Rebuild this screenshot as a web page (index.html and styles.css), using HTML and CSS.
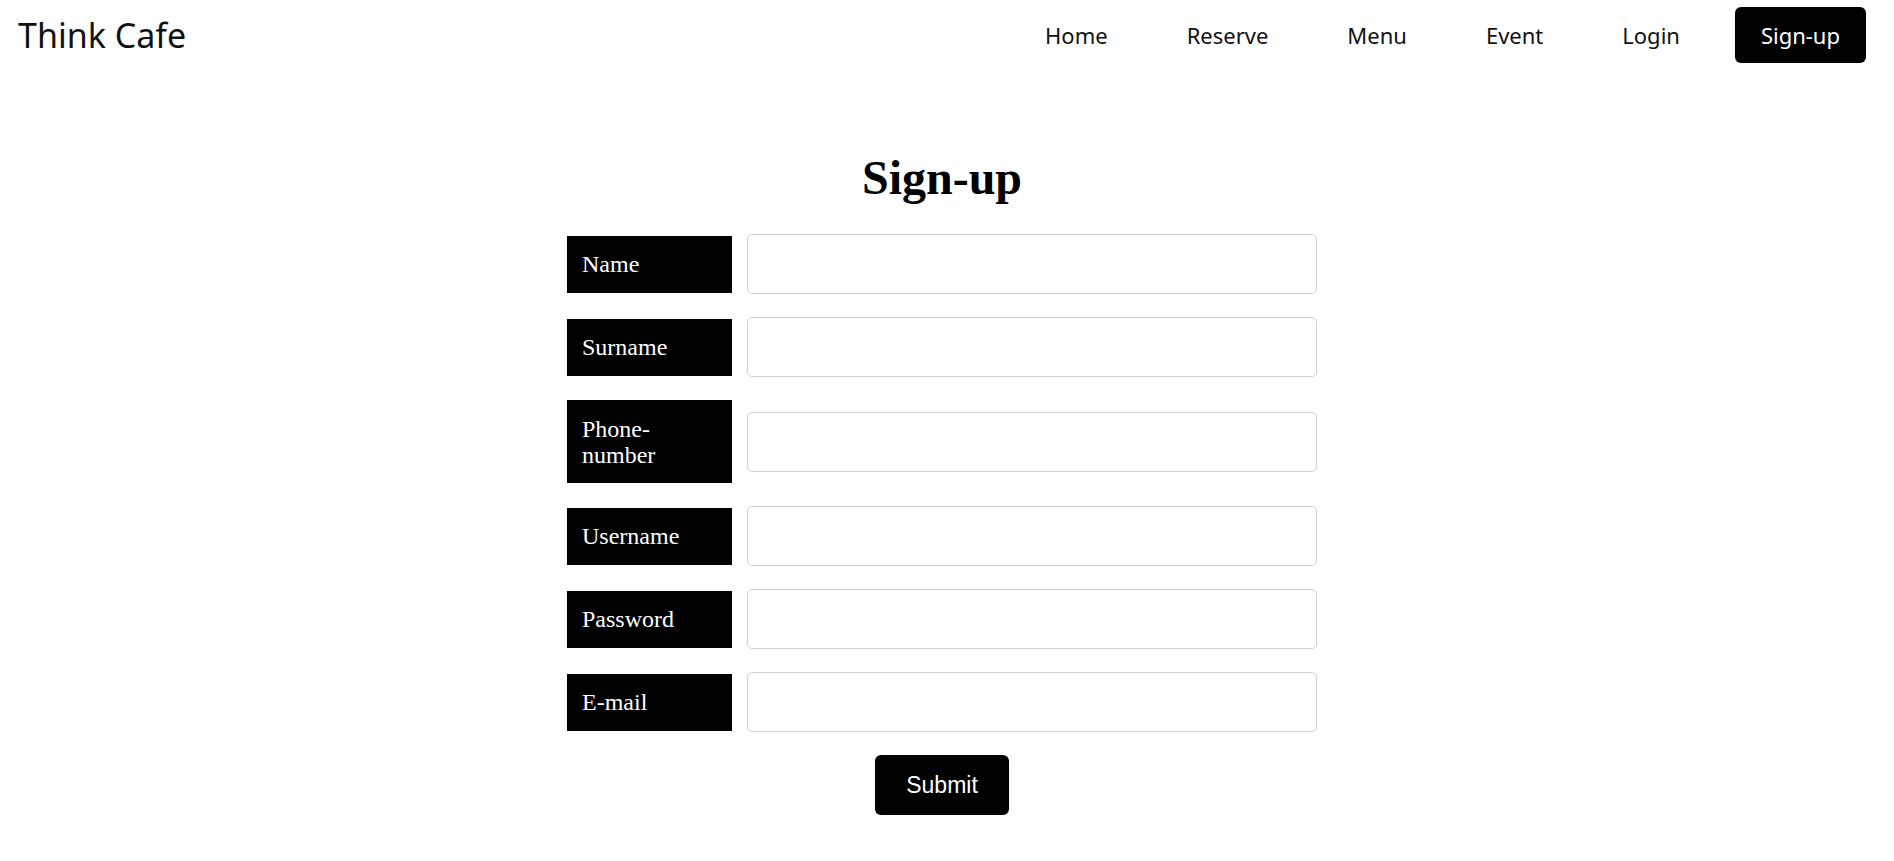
FILE: index.html
```html
<!DOCTYPE html>
<html lang="en">
<head>
<meta charset="utf-8">
<title>Think Cafe - Sign-up</title>
<link rel="stylesheet" href="styles.css">
</head>
<body>
<header class="topbar">
  <div class="logo">Think Cafe</div>
  <nav class="nav">
    <a class="nav-link" href="#">Home</a>
    <a class="nav-link" href="#">Reserve</a>
    <a class="nav-link" href="#">Menu</a>
    <a class="nav-link" href="#">Event</a>
    <a class="nav-link" href="#">Login</a>
    <a class="nav-link nav-active" href="#">Sign-up</a>
  </nav>
</header>
<main class="main">
  <h1 class="title">Sign-up</h1>
  <form class="form">
    <div class="row">
      <label class="label" for="name">Name</label>
      <input class="field" id="name" type="text">
    </div>
    <div class="row">
      <label class="label" for="surname">Surname</label>
      <input class="field" id="surname" type="text">
    </div>
    <div class="row">
      <label class="label" for="phone">Phone-number</label>
      <input class="field" id="phone" type="text">
    </div>
    <div class="row">
      <label class="label" for="username">Username</label>
      <input class="field" id="username" type="text">
    </div>
    <div class="row">
      <label class="label" for="password">Password</label>
      <input class="field" id="password" type="password">
    </div>
    <div class="row">
      <label class="label" for="email">E-mail</label>
      <input class="field" id="email" type="email">
    </div>
    <div class="actions">
      <button class="submit" type="button">Submit</button>
    </div>
  </form>
</main>
</body>
</html>
```
FILE: styles.css
```css
* { box-sizing: border-box; }

html, body {
  margin: 0;
  padding: 0;
  background: #ffffff;
}

body {
  font-family: "Noto Sans", "Open Sans", sans-serif;
  color: #000;
}

.topbar {
  height: 70px;
  display: flex;
  align-items: center;
  justify-content: space-between;
  padding: 0 28px 0 18px;
}

.logo {
  font-size: 34px;
  color: #111;
  line-height: 1;
}

.nav {
  display: flex;
  align-items: center;
  gap: 31px;
}

.nav-link {
  font-size: 22px;
  color: #111;
  text-decoration: none;
  padding: 12px 24px;
  line-height: 32px;
  border-radius: 6px;
}

.nav-active {
  background: #000;
  color: #fff;
  padding: 12px 26px;
}

.main {
  padding-right: 10px;
}

.title {
  font-family: "Liberation Serif", "Times New Roman", serif;
  font-weight: bold;
  font-size: 48px;
  text-align: center;
  margin: 80px 0 29px;
}

.form {
  width: 750px;
  margin: 0 auto;
  display: flex;
  flex-direction: column;
  gap: 23px;
}

.row {
  display: flex;
  align-items: center;
  gap: 15px;
}

.label {
  width: 165px;
  flex: none;
  background: #000;
  color: #fff;
  font-family: "Liberation Serif", "Times New Roman", serif;
  font-size: 24px;
  line-height: 26px;
  padding: 15.5px 15px;
}

.field {
  flex: 1;
  height: 60px;
  border: 1px solid #cfcfcf;
  border-radius: 5px;
  background: #fff;
  font-size: 20px;
  padding: 0 12px;
}

.actions {
  display: flex;
  justify-content: center;
}

.submit {
  background: #000;
  color: #fff;
  border: none;
  border-radius: 6px;
  font-family: "Liberation Sans", Arial, sans-serif;
  font-size: 23px;
  height: 60px;
  padding: 0 31px;
}
```
